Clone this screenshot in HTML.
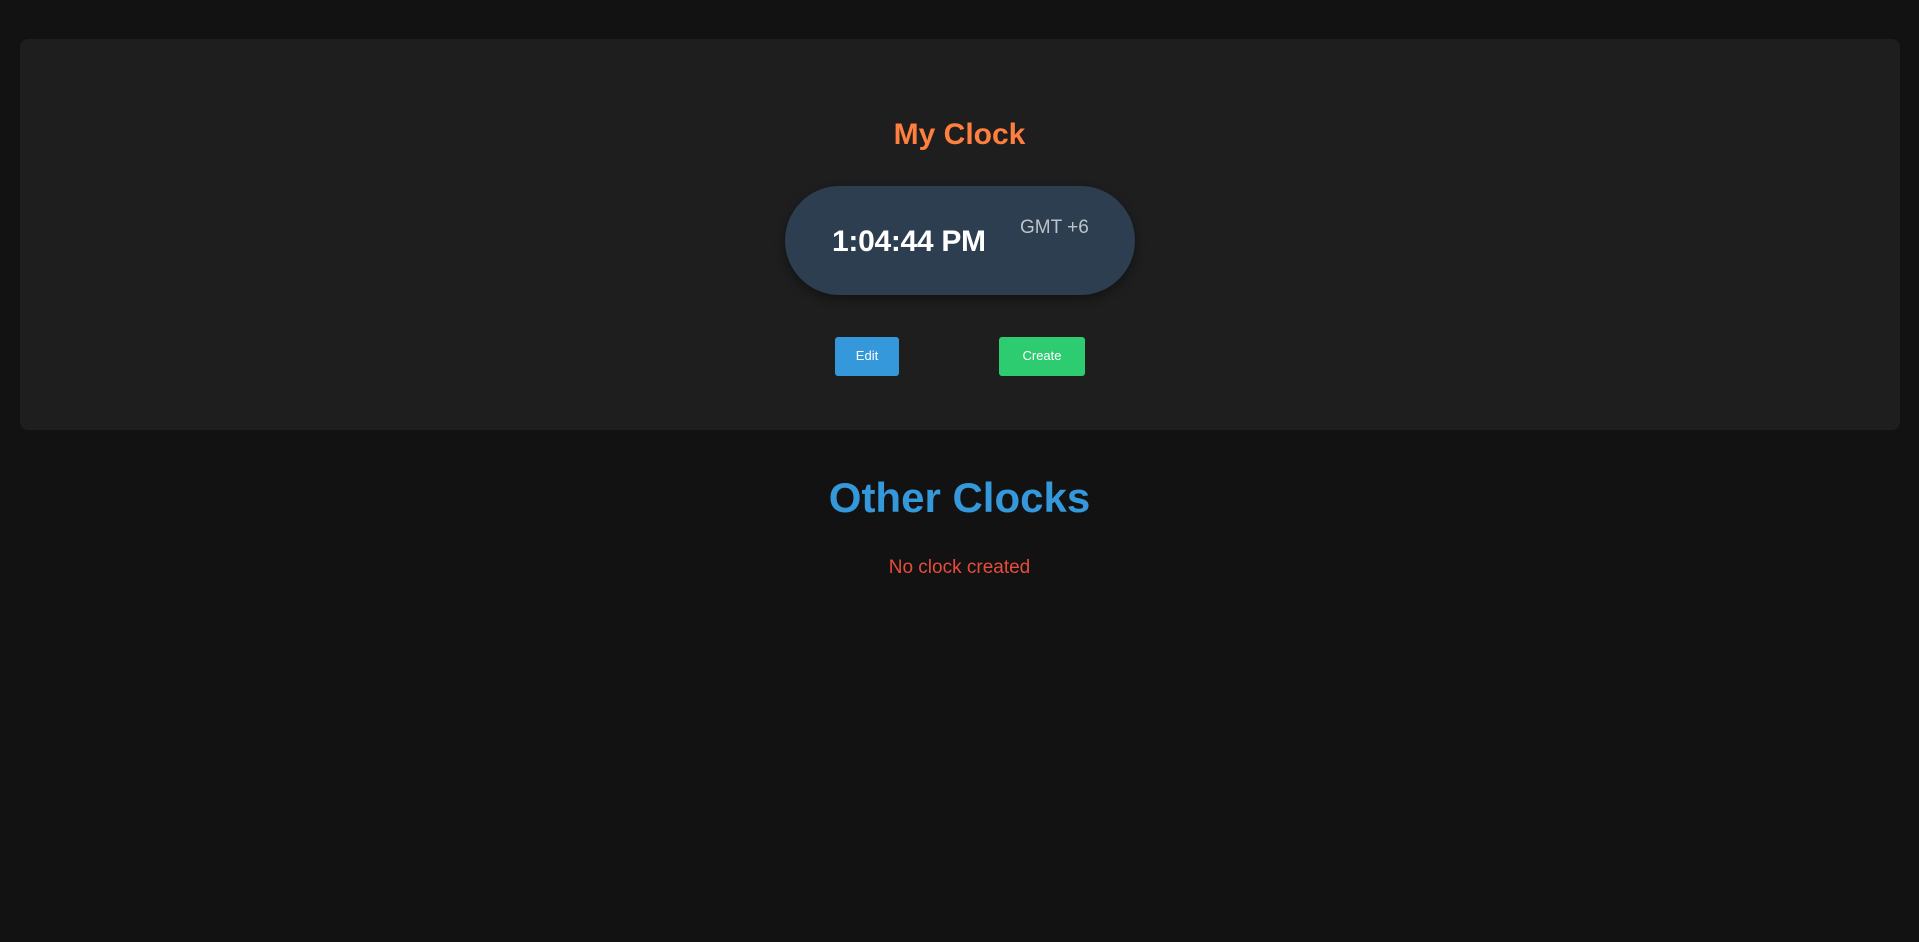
<!DOCTYPE html>
<html><head><style>
body{margin:0;background:#121212;width:1919px;height:942px;overflow:hidden;font-family:"Liberation Sans",sans-serif;position:relative}
.panel{position:absolute;left:20px;top:39px;width:1880px;height:391px;background:#1e1e1e;border-radius:8px}
.abs{position:absolute;white-space:nowrap}
</style></head><body>
<div class="panel"></div>
<div class="abs" style="left:0;width:1919px;text-align:center;top:118px;font-size:30px;font-weight:bold;color:#ff7f3f">My Clock</div>
<div class="abs" style="left:785px;top:186px;width:350px;height:109px;border-radius:55px;background:#2c3e50;box-shadow:0 4px 10px rgba(0,0,0,.4)"></div>
<div class="abs" style="left:832px;top:225px;font-size:30px;font-weight:bold;color:#fff;letter-spacing:-0.3px">1:04:44 PM</div>
<div class="abs" style="left:1020px;top:217px;font-size:19px;color:#bdc3c7">GMT +6</div>
<div class="abs" style="left:835px;top:337px;width:64px;height:39px;background:#3498db;border-radius:3px;color:#fff;font-size:13px;text-align:center;line-height:38px">Edit</div>
<div class="abs" style="left:999px;top:337px;width:86px;height:39px;background:#2ecc71;border-radius:3px;color:#fff;font-size:13px;text-align:center;line-height:38px">Create</div>
<div class="abs" style="left:0;width:1919px;text-align:center;top:474px;font-size:42px;font-weight:bold;color:#3498db">Other Clocks</div>
<div class="abs" style="left:0;width:1919px;text-align:center;top:557px;font-size:19px;color:#e74c3c">No clock created</div>
</body></html>
